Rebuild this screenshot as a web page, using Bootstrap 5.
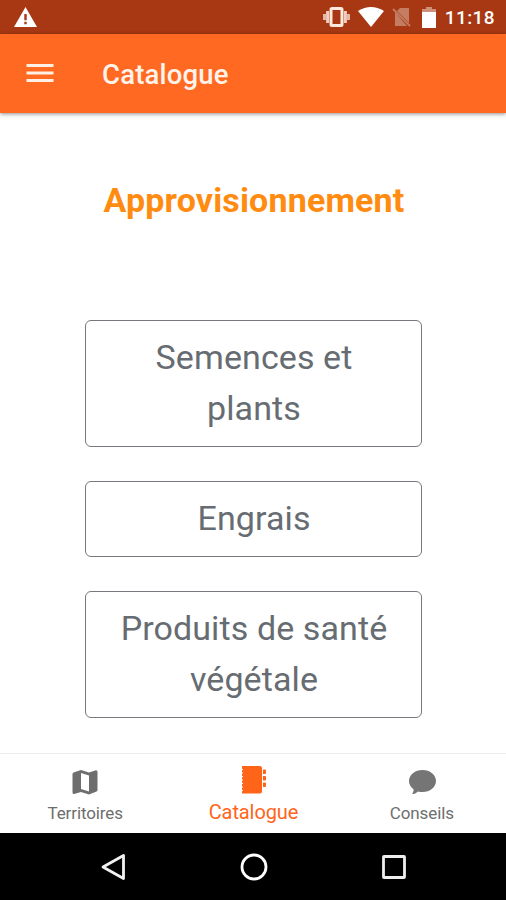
<!DOCTYPE html>
<html lang="fr">
<head>
<meta charset="utf-8">
<meta name="viewport" content="width=device-width, initial-scale=1">
<title>Catalogue</title>
<link href="https://cdn.jsdelivr.net/npm/bootstrap@5.3.0/dist/css/bootstrap.min.css" rel="stylesheet">
<style>
body{font-family:Roboto,"Liberation Sans",sans-serif;height:900px;overflow:hidden;background:#fff}
svg{display:block;flex:none}
.statusbar{height:34px;background:#a73813;padding:0 11px 0 14px}
.clock{font-size:19px;font-weight:500;line-height:34px;letter-spacing:.4px;padding-top:2px;margin-left:9px}
.battery{margin-left:11px}
.appbar{height:79px;background:#ff6922;padding:0 26px;box-shadow:0 1px 4px rgba(0,0,0,.45);z-index:1}
.apptitle{font-size:27.5px;font-weight:500;line-height:32px;letter-spacing:.2px;color:#fff3ea;padding-top:3px}
.heading{font-size:34px;font-weight:700;line-height:40px;letter-spacing:.17px;color:#ff8b10;padding:67px 0 0 2px;margin-bottom:100px}
.choices{width:337px;gap:34px}
.choice{font-size:34px;line-height:51px;letter-spacing:.1px;padding:10.5px 23px 12.5px 25px;border:1px solid #75797d;border-radius:6px;color:#666c72}
.choice:hover{border-color:#75797d}
.tabs{height:80px;border-top:1px solid #ececec;background:#fff;padding-left:1px}
.tab{color:#6e6e6e;font-size:17px;line-height:20px;letter-spacing:-.12px;padding-top:12px}
.tab svg{margin-bottom:4px}
.tab.current{color:#ff6419;font-size:20px;letter-spacing:-.1px}
.tab.current span{margin-top:-1px}
.sysnav{height:67px;background:#000;gap:112.5px;padding-left:1px}
.sysnav svg{width:28px;height:28px}
</style>
<script src="https://cdn.jsdelivr.net/npm/bootstrap@5.3.0/dist/js/bootstrap.bundle.min.js"></script>
</head>
<body class="d-flex flex-column">
<div class="statusbar d-flex align-items-center text-white">
  <svg width="23" height="20" viewBox="0 0 23 20" fill="#fff"><path d="M11.5 0 23 20H0zM10.3 7v6.2h2.4V7zm0 7.8v2.4h2.4v-2.4z" fill-rule="evenodd"/></svg>
  <div class="ms-auto d-flex align-items-center">
    <svg width="27" height="20" viewBox="0 0 27 20"><rect x="8" y="1.5" width="11" height="17" rx="1" fill="none" stroke="#ffe9df" stroke-width="3"/><path d="M4.6 4v12M22.4 4v12" stroke="#f3cdbd" stroke-width="3"/><path d="M1.5 7v6M25.5 7v6" stroke="#e9c0ae" stroke-width="2.8"/></svg>
    <svg class="ms-2" width="26" height="20" viewBox="0 0 26 20"><path d="M0 4Q13-4 26 4L13 20z" fill="#fff"/></svg>
    <svg class="ms-2" width="19" height="21" viewBox="0 0 19 21"><path d="M8 1h9v15L5 4z" fill="#c47c62"/><path d="M3 5v14h12z" fill="#c47c62"/><path d="m1 2 17 17" stroke="#c47c62" stroke-width="1.8"/></svg>
    <svg class="battery" width="14" height="21" viewBox="0 0 14 21"><path d="M4 0h6v2h4v4H0V2h4z" fill="#cf907a"/><path d="M0 5h14v16H0z" fill="#fff"/></svg>
    <span class="clock">11:18</span>
  </div>
</div>
<header class="appbar d-flex align-items-center position-relative">
  <svg class="me-5" width="28" height="20" viewBox="0 0 28 20"><path d="M.5 1.5h27M.5 9h27M.5 16.500h27" stroke="#fff0e6" stroke-width="3"/></svg>
  <h1 class="apptitle mb-0">Catalogue</h1>
</header>
<main class="flex-grow-1 d-flex flex-column align-items-center">
  <h2 class="heading text-center">Approvisionnement</h2>
  <div class="choices d-flex flex-column">
    <button class="btn choice" type="button">Semences et plants</button>
    <button class="btn choice" type="button">Engrais</button>
    <button class="btn choice" type="button">Produits de santé végétale</button>
  </div>
</main>
<nav class="tabs row g-0 text-center">
  <div class="tab col d-flex flex-column align-items-center">
    <svg width="26" height="33" viewBox="0 0 26 33"><path d="M9 4 17 6.500 24 4.200q1.500 0 1.500 1.500V24q0 1-1 1.500L17 28.500 9 26 2 28q-1.500 0-1.500-1.500V8q0-1 1-1.500z" fill="#6e6e6e"/><path d="m9 7 8 2.500v16L9 23z" fill="#fff"/></svg>
    <span>Territoires</span>
  </div>
  <div class="tab current col d-flex flex-column align-items-center">
    <svg width="26" height="33" viewBox="0 0 26 33"><path d="M2 0h18q2 0 2 2v23.500q0 2-2 2H2V25h1v-1H2v-2.500h1v-1H2V18h1v-1H2v-2.500h1v-1H2V11h1v-1H2V7.500h1v-1H2V4h1V3H2zM23 3.500h2q1 0 1 1V7q0 1-1 1h-2zM23 10h2q1 0 1 1v2.500q0 1-1 1h-2zM23 16.500h2q1 0 1 1V20q0 1-1 1h-2z" fill="#ff6419"/></svg>
    <span>Catalogue</span>
  </div>
  <div class="tab col d-flex flex-column align-items-center">
    <svg width="28" height="33" viewBox="0 0 28 33"><path d="M14.500 4C22 4 28 8.900 28 15s-6 11-13.500 11c-1.600 0-3.100-.2-4.500-.6-1.700 1.600-3.700 2.700-6 2.700 1.200-1.500 1.700-3.200 1.500-4.900C2.700 21.200 1 18.300 1 15 1 8.900 7 4 14.500 4z" fill="#757575"/></svg>
    <span>Conseils</span>
  </div>
</nav>
<div class="sysnav d-flex align-items-center justify-content-center">
  <svg viewBox="0 0 28 28"><path d="M24.500 2.500v23L4 14z" fill="none" stroke="#f2f2f2" stroke-width="2.800" stroke-linejoin="round"/></svg>
  <svg viewBox="0 0 28 28"><circle cx="14" cy="14" r="12" fill="none" stroke="#fff" stroke-width="2.800"/></svg>
  <svg viewBox="0 0 28 28"><rect x="3.500" y="3.500" width="21" height="21" rx=".5" fill="none" stroke="#eee" stroke-width="2.800"/></svg>
</div>
</body>
</html>
